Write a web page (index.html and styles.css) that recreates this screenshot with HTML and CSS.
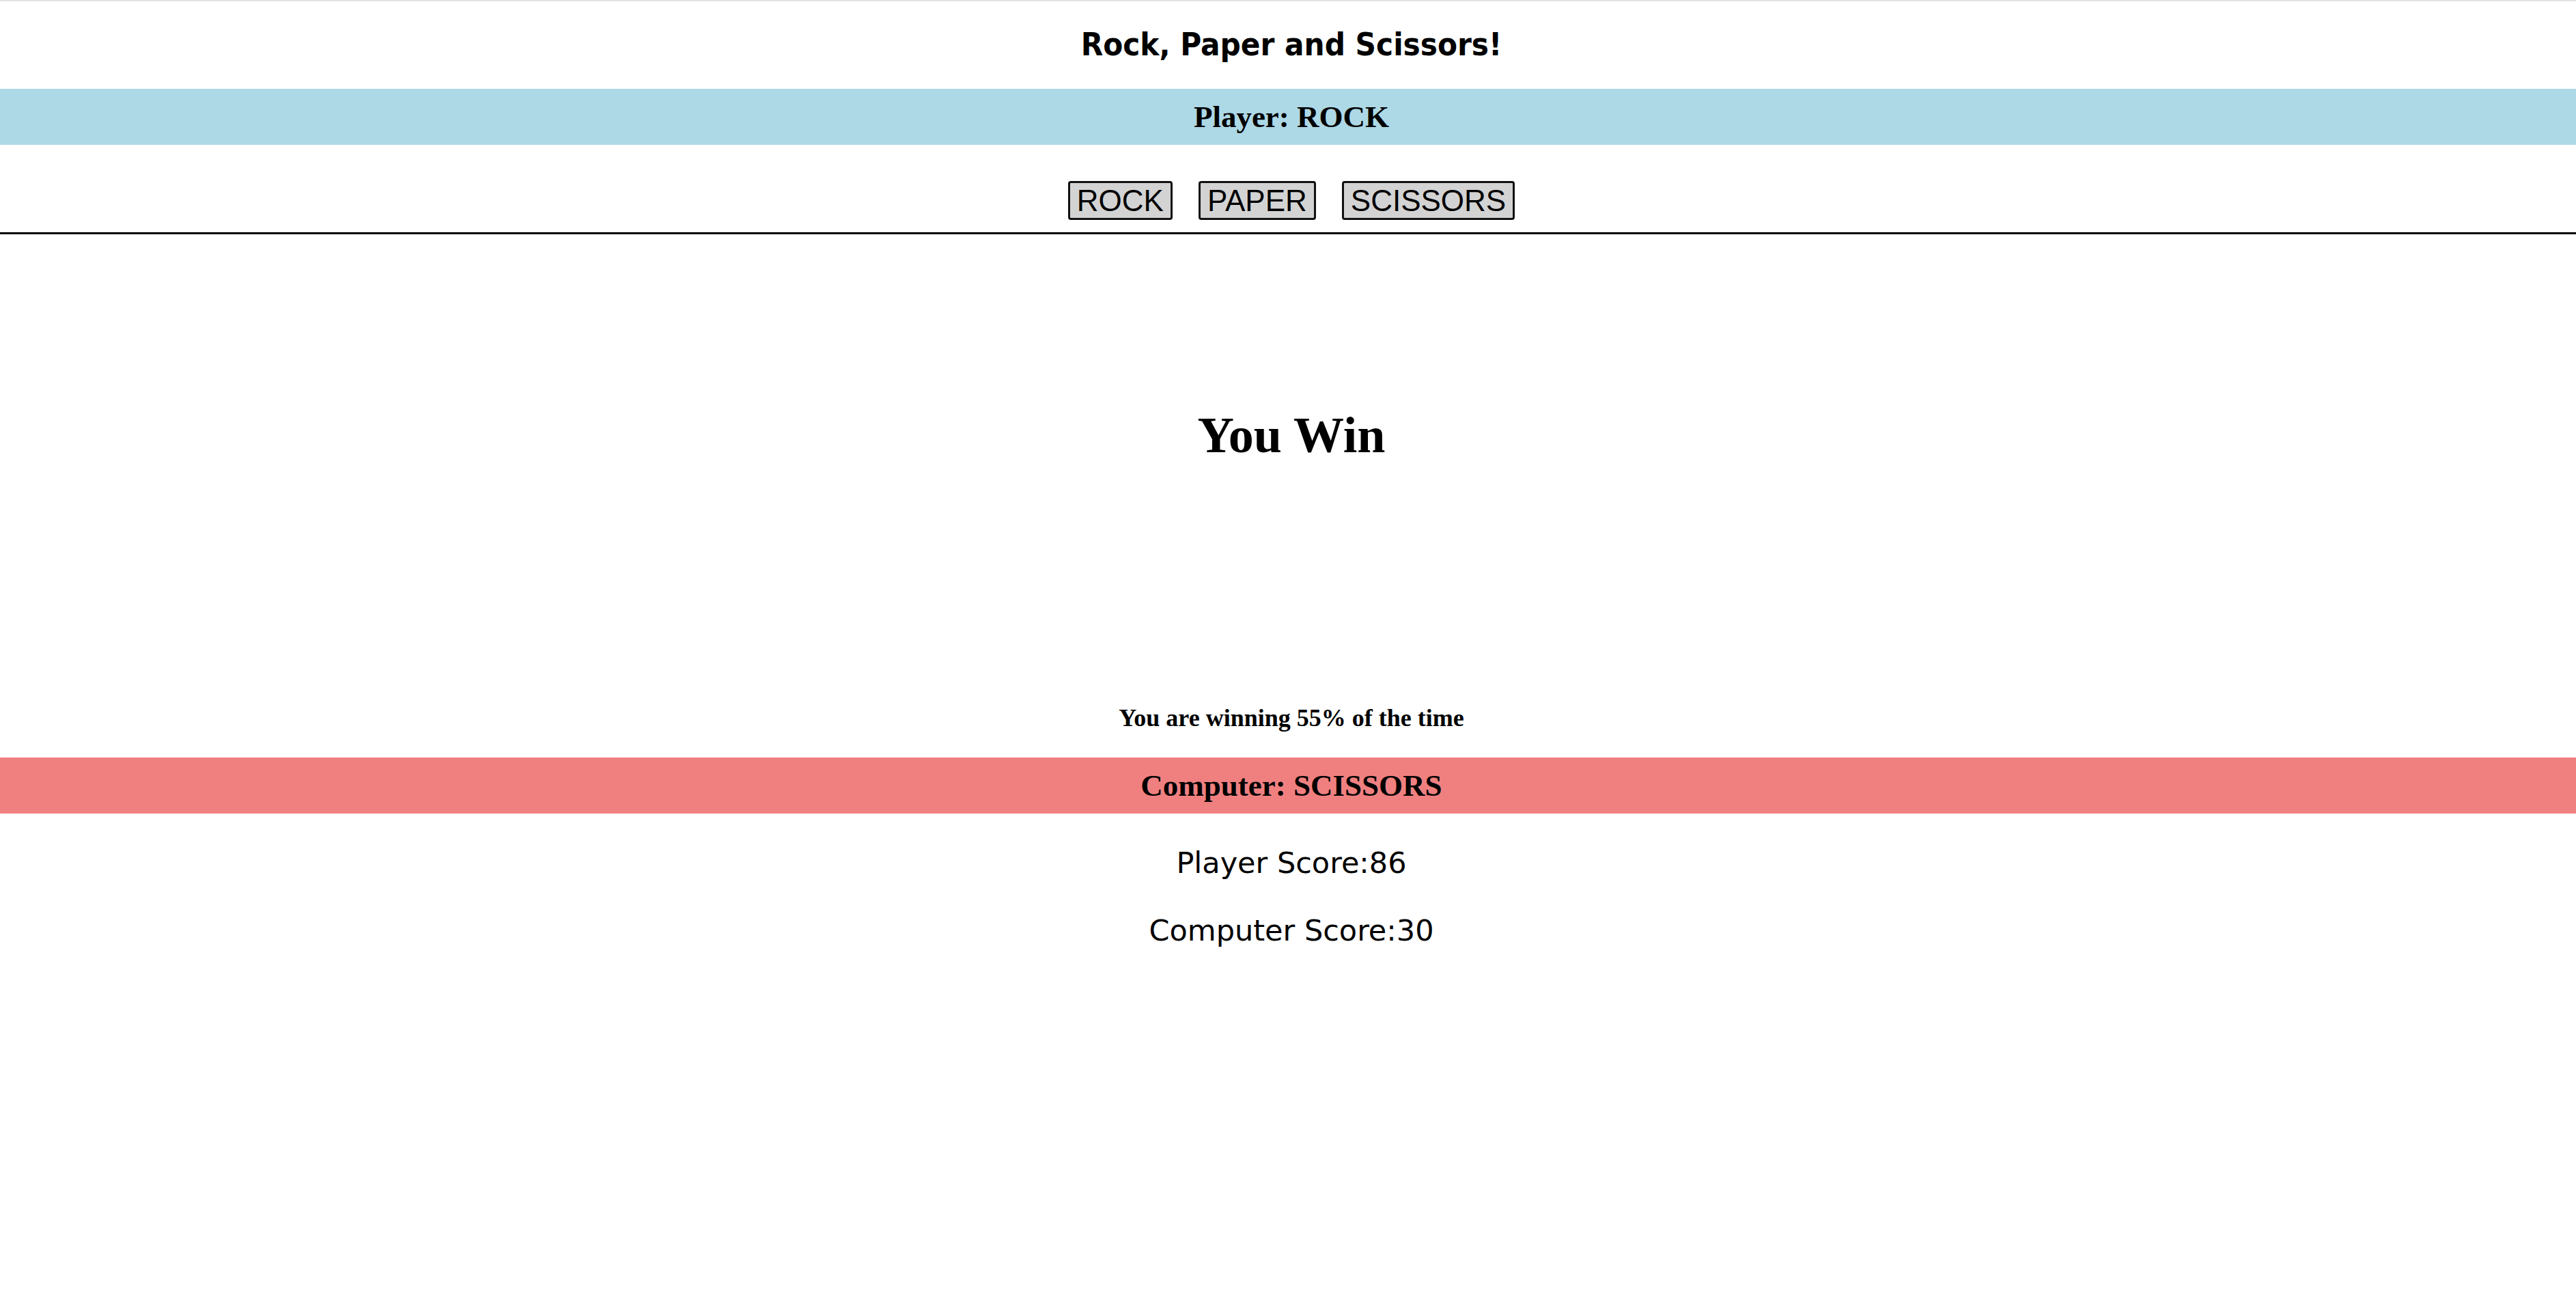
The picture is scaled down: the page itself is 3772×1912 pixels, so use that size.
FILE: index.html
```html
<!DOCTYPE html>
<html lang="en">
<head>
<meta charset="utf-8">
<title>Rock, Paper and Scissors!</title>
<link rel="stylesheet" href="styles.css">
</head>
<body>
<div class="page">
  <header class="title-row">
    <h2 class="title">Rock, Paper and Scissors!</h2>
  </header>
  <div class="band band-player">
    <h3 class="band-text">Player: ROCK</h3>
  </div>
  <div class="controls">
    <button class="choice">ROCK</button>
    <button class="choice">PAPER</button>
    <button class="choice">SCISSORS</button>
  </div>
  <hr class="divider">
  <section class="result">
    <h1 class="result-text">You Win</h1>
    <h4 class="rate">You are winning 55% of the time</h4>
  </section>
  <div class="band band-computer">
    <h3 class="band-text">Computer: SCISSORS</h3>
  </div>
  <section class="scores">
    <p class="score">Player Score:86</p>
    <p class="score">Computer Score:30</p>
  </section>
</div>
</body>
</html>
```
FILE: styles.css
```css
html, body {
  margin: 0;
  padding: 0;
  background: #ffffff;
  color: #000000;
}
body {
  border-top: 2px solid #e2e2e2;
}
.page {
  display: flex;
  flex-direction: column;
}
.title-row {
  height: 128px;
  padding: 0 0 4px 10px;
  box-sizing: border-box;
  display: flex;
  align-items: center;
  justify-content: center;
}
.title {
  margin: 0;
  font-family: "DejaVu Sans Condensed", "DejaVu Sans", sans-serif;
  font-stretch: condensed;
  font-weight: bold;
  font-size: 47px;
  line-height: 1;
}
.band {
  height: 82px;
  padding-left: 10px;
  box-sizing: border-box;
  display: flex;
  align-items: center;
  justify-content: center;
}
.band-player {
  background: #add8e6;
}
.band-computer {
  background: #f08080;
}
.band-text {
  margin: 0;
  font-family: "Liberation Serif", "Times New Roman", serif;
  font-weight: bold;
  font-size: 45px;
  line-height: 1;
}
.controls {
  display: flex;
  justify-content: center;
  gap: 38px;
  padding: 53px 0 18px 10px;
}
.choice {
  height: 57px;
  box-sizing: border-box;
  margin: 0;
  padding: 0 10px;
  font-family: "Liberation Sans", Arial, sans-serif;
  font-size: 44px;
  line-height: 1;
  color: #000;
  background: #d3d3d3;
  border: 3px solid #111;
  border-radius: 4px;
}
.divider {
  margin: 0;
  border: 0;
  height: 3px;
  background: #000;
}
.result {
  display: flex;
  flex-direction: column;
  align-items: center;
  padding: 244px 0 0 10px;
}
.result-text {
  margin: 0;
  height: 100px;
  display: flex;
  align-items: center;
  font-family: "Liberation Serif", "Times New Roman", serif;
  font-weight: bold;
  font-size: 74px;
}
.rate {
  margin: 339px 0 33px;
  height: 50px;
  display: flex;
  align-items: center;
  font-family: "Liberation Serif", "Times New Roman", serif;
  font-weight: bold;
  font-size: 36px;
}
.scores {
  display: flex;
  flex-direction: column;
  align-items: center;
  padding: 42px 0 0 10px;
  gap: 39px;
}
.score {
  margin: 0;
  height: 60px;
  display: flex;
  align-items: center;
  font-family: "DejaVu Sans", Verdana, sans-serif;
  font-size: 43px;
}
```
